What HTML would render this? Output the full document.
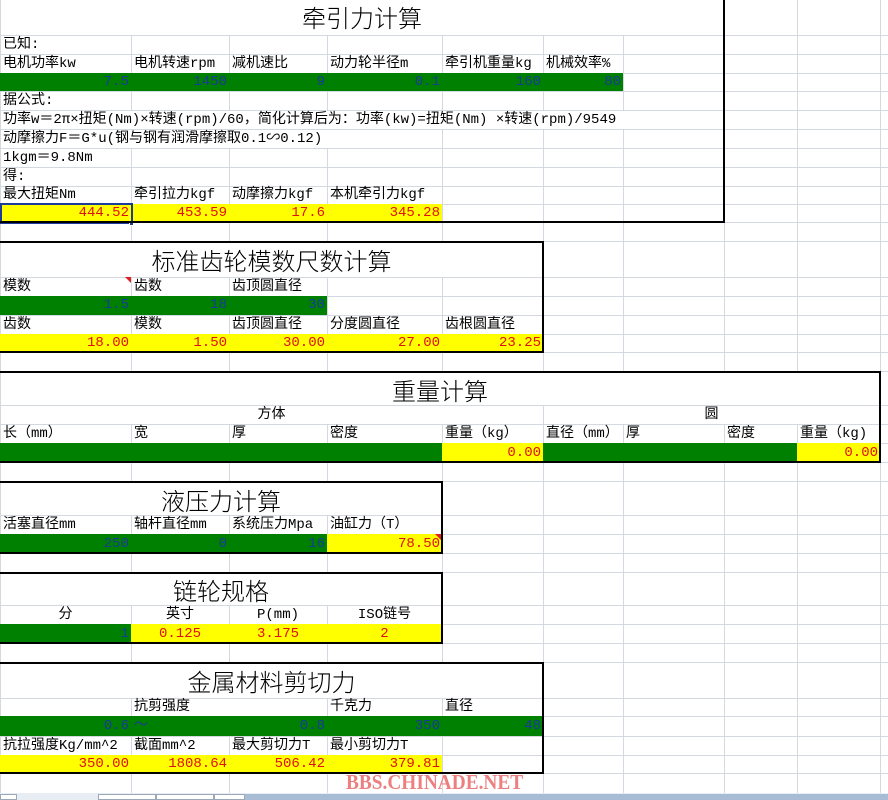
<!DOCTYPE html>
<html><head><meta charset="utf-8">
<style>
*{margin:0;padding:0;box-sizing:border-box}
body{width:888px;height:800px;overflow:hidden;background:#fff;position:relative;font-family:"Liberation Mono","Noto Sans CJK SC",monospace;font-size:14px;color:#000}
.v{position:absolute;top:0;width:1px;height:800px;background:#d4d8e0}
.h{position:absolute;left:0;height:1px;width:888px;background:#d4d8e0}
.f{position:absolute}
.g{background:#008000}
.y{background:#ffff00}
.w{background:#fff}
.c{position:absolute;white-space:nowrap;line-height:19px;padding:0 2px}
.r{text-align:right;font-family:"Liberation Mono","Noto Sans CJK SC",monospace;font-size:14px}
.n{color:#1a3a9a}
.e{color:#e01010}
.m{text-align:center}
.t{position:absolute;text-align:center;font-size:24px;font-family:"Noto Sans CJK SC","WenQuanYi Zen Hei",sans-serif;font-weight:300;line-height:30px}
.bt{position:absolute;height:2px;background:#000}
.bv{position:absolute;width:2px;background:#000}
</style></head><body>
<div class="v" style="left:0"></div><div class="v" style="left:131px"></div><div class="v" style="left:229px"></div><div class="v" style="left:327px"></div><div class="v" style="left:442px"></div><div class="v" style="left:543px"></div><div class="v" style="left:623px"></div><div class="v" style="left:724px"></div><div class="v" style="left:797px"></div><div class="v" style="left:880px"></div>
<div class="h" style="top:35px"></div><div class="h" style="top:54px"></div><div class="h" style="top:73px"></div><div class="h" style="top:91px"></div><div class="h" style="top:110px"></div><div class="h" style="top:129px"></div><div class="h" style="top:148px"></div><div class="h" style="top:167px"></div><div class="h" style="top:186px"></div><div class="h" style="top:204px"></div><div class="h" style="top:222px"></div><div class="h" style="top:241px"></div><div class="h" style="top:277px"></div><div class="h" style="top:296px"></div><div class="h" style="top:315px"></div><div class="h" style="top:334px"></div><div class="h" style="top:352px"></div><div class="h" style="top:371px"></div><div class="h" style="top:405px"></div><div class="h" style="top:424px"></div><div class="h" style="top:443px"></div><div class="h" style="top:462px"></div><div class="h" style="top:481px"></div><div class="h" style="top:515px"></div><div class="h" style="top:534px"></div><div class="h" style="top:553px"></div><div class="h" style="top:572px"></div><div class="h" style="top:605px"></div><div class="h" style="top:624px"></div><div class="h" style="top:643px"></div><div class="h" style="top:662px"></div><div class="h" style="top:698px"></div><div class="h" style="top:716px"></div><div class="h" style="top:736px"></div><div class="h" style="top:755px"></div><div class="h" style="top:773px"></div>

<div class="f w" style="left:1px;top:0;width:723px;height:35px"></div>
<div class="f w" style="left:1px;top:111px;width:722px;height:18px"></div>
<div class="f w" style="left:1px;top:130px;width:440px;height:18px"></div>
<div class="t" style="left:0;top:2px;width:724px">牵引力计算</div>
<div class="c" style="left:1px;top:36px">已知:</div>
<div class="c" style="left:1px;top:55px">电机功率kw</div><div class="c" style="left:132px;top:55px">电机转速rpm</div><div class="c" style="left:230px;top:55px">减机速比</div><div class="c" style="left:328px;top:55px">动力轮半径m</div><div class="c" style="left:443px;top:55px">牵引机重量kg</div><div class="c" style="left:544px;top:55px">机械效率%</div>
<div class="f g" style="left:0;top:73px;width:623px;height:18px"></div>
<div class="c r n" style="left:0;top:73px;width:131px">7.5</div><div class="c r n" style="left:131px;top:73px;width:98px">1450</div><div class="c r n" style="left:229px;top:73px;width:98px">9</div><div class="c r n" style="left:327px;top:73px;width:115px">0.1</div><div class="c r n" style="left:442px;top:73px;width:101px">160</div><div class="c r n" style="left:543px;top:73px;width:80px">80</div>
<div class="c" style="left:1px;top:92px">据公式:</div>
<div class="c" style="left:1px;top:111px">功率w＝2π×扭矩(Nm)×转速(rpm)/60，简化计算后为：功率(kw)=扭矩(Nm) ×转速(rpm)/9549</div>
<div class="c" style="left:1px;top:130px">动摩擦力F＝G*u(钢与钢有润滑摩擦取0.1∽0.12)</div>
<div class="c" style="left:1px;top:149px">1kgm＝9.8Nm</div>
<div class="c" style="left:1px;top:168px">得:</div>
<div class="c" style="left:1px;top:186px">最大扭矩Nm</div><div class="c" style="left:132px;top:186px">牵引拉力kgf</div><div class="c" style="left:230px;top:186px">动摩擦力kgf</div><div class="c" style="left:328px;top:186px">本机牵引力kgf</div>
<div class="f y" style="left:0;top:204px;width:442px;height:18px"></div>
<div class="c r e" style="left:0;top:204px;width:131px">444.52</div><div class="c r e" style="left:131px;top:204px;width:98px">453.59</div><div class="c r e" style="left:229px;top:204px;width:98px">17.6</div><div class="c r e" style="left:327px;top:204px;width:115px">345.28</div>
<div class="f" style="left:0;top:203px;width:133px;height:21px;border:2px solid #1c3c9c"></div>
<div class="f" style="left:129px;top:221px;width:5px;height:5px;background:#1c3c9c;border:1px solid #fff"></div>
<div class="bv" style="left:723px;top:0;height:223px"></div>
<div class="bt" style="left:0;top:221px;width:725px"></div>

<div class="f w" style="left:1px;top:242px;width:541px;height:35px"></div>
<div class="t" style="left:0;top:245px;width:543px">标准齿轮模数尺数计算</div>
<div class="c" style="left:1px;top:278px">模数</div><div class="c" style="left:132px;top:278px">齿数</div><div class="c" style="left:230px;top:278px">齿顶圆直径</div>
<div class="f" style="left:125px;top:277px;width:0;height:0;border-top:6px solid #e02020;border-left:6px solid transparent"></div>
<div class="f g" style="left:0;top:296px;width:327px;height:19px"></div>
<div class="c r n" style="left:0;top:296px;width:131px">1.5</div><div class="c r n" style="left:131px;top:296px;width:98px">18</div><div class="c r n" style="left:229px;top:296px;width:98px">30</div>
<div class="c" style="left:1px;top:316px">齿数</div><div class="c" style="left:132px;top:316px">模数</div><div class="c" style="left:230px;top:316px">齿顶圆直径</div><div class="c" style="left:328px;top:316px">分度圆直径</div><div class="c" style="left:443px;top:316px">齿根圆直径</div>
<div class="f y" style="left:0;top:334px;width:543px;height:18px"></div>
<div class="c r e" style="left:0;top:334px;width:131px">18.00</div><div class="c r e" style="left:131px;top:334px;width:98px">1.50</div><div class="c r e" style="left:229px;top:334px;width:98px">30.00</div><div class="c r e" style="left:327px;top:334px;width:115px">27.00</div><div class="c r e" style="left:442px;top:334px;width:101px">23.25</div>
<div class="bt" style="left:0;top:241px;width:544px"></div><div class="bv" style="left:542px;top:241px;height:112px"></div><div class="bt" style="left:0;top:351px;width:544px"></div>

<div class="f w" style="left:1px;top:372px;width:878px;height:33px"></div>
<div class="f w" style="left:1px;top:406px;width:541px;height:18px"></div>
<div class="f w" style="left:544px;top:406px;width:335px;height:18px"></div>
<div class="t" style="left:0;top:375px;width:880px">重量计算</div>
<div class="c m" style="left:0;top:406px;width:543px">方体</div><div class="c m" style="left:543px;top:406px;width:337px">圆</div>
<div class="c" style="left:1px;top:425px">长（mm）</div><div class="c" style="left:132px;top:425px">宽</div><div class="c" style="left:230px;top:425px">厚</div><div class="c" style="left:328px;top:425px">密度</div><div class="c" style="left:443px;top:425px">重量（kg）</div><div class="c" style="left:544px;top:425px">直径（mm）</div><div class="c" style="left:624px;top:425px">厚</div><div class="c" style="left:725px;top:425px">密度</div><div class="c" style="left:798px;top:425px">重量（kg)</div>
<div class="f g" style="left:0;top:443px;width:442px;height:19px"></div><div class="f y" style="left:442px;top:443px;width:101px;height:19px"></div><div class="f g" style="left:543px;top:443px;width:254px;height:19px"></div><div class="f y" style="left:797px;top:443px;width:83px;height:19px"></div>
<div class="c r e" style="left:442px;top:444px;width:101px">0.00</div><div class="c r e" style="left:797px;top:444px;width:83px">0.00</div>
<div class="bt" style="left:0;top:371px;width:881px"></div><div class="bv" style="left:879px;top:371px;height:92px"></div><div class="bt" style="left:0;top:461px;width:881px"></div>

<div class="f w" style="left:1px;top:482px;width:440px;height:33px"></div>
<div class="t" style="left:0;top:485px;width:442px">液压力计算</div>
<div class="c" style="left:1px;top:516px">活塞直径mm</div><div class="c" style="left:132px;top:516px">轴杆直径mm</div><div class="c" style="left:230px;top:516px">系统压力Mpa</div><div class="c" style="left:328px;top:516px">油缸力（T）</div>
<div class="f g" style="left:0;top:534px;width:327px;height:19px"></div><div class="f y" style="left:327px;top:534px;width:115px;height:19px"></div>
<div class="c r n" style="left:0;top:535px;width:131px">250</div><div class="c r n" style="left:131px;top:535px;width:98px">0</div><div class="c r n" style="left:229px;top:535px;width:98px">16</div><div class="c r e" style="left:327px;top:535px;width:115px">78.50</div>
<div class="f" style="left:435px;top:534px;width:0;height:0;border-top:6px solid #e02020;border-left:6px solid transparent"></div>
<div class="bt" style="left:0;top:481px;width:443px"></div><div class="bv" style="left:441px;top:481px;height:73px"></div><div class="bt" style="left:0;top:552px;width:443px"></div>

<div class="f w" style="left:1px;top:573px;width:440px;height:32px"></div>
<div class="t" style="left:0;top:575px;width:442px">链轮规格</div>
<div class="c m" style="left:0;top:606px;width:131px">分</div><div class="c m" style="left:131px;top:606px;width:98px">英寸</div><div class="c m" style="left:229px;top:606px;width:98px">P(mm)</div><div class="c m" style="left:327px;top:606px;width:115px">ISO链号</div>
<div class="f g" style="left:0;top:624px;width:131px;height:19px"></div><div class="f y" style="left:131px;top:624px;width:311px;height:19px"></div>
<div class="c r n" style="left:0;top:625px;width:131px">1</div><div class="c r e" style="left:131px;top:625px;width:98px;text-align:center">0.125</div><div class="c r e" style="left:229px;top:625px;width:98px;text-align:center">3.175</div><div class="c r e" style="left:327px;top:625px;width:115px;text-align:center">2</div>
<div class="bt" style="left:0;top:572px;width:443px"></div><div class="bv" style="left:441px;top:572px;height:72px"></div><div class="bt" style="left:0;top:642px;width:443px"></div>

<div class="f w" style="left:1px;top:663px;width:541px;height:35px"></div>
<div class="f w" style="left:132px;top:699px;width:194px;height:17px"></div>
<div class="t" style="left:0;top:666px;width:543px">金属材料剪切力</div>
<div class="c" style="left:132px;top:698px">抗剪强度</div><div class="c" style="left:328px;top:698px">千克力</div><div class="c" style="left:443px;top:698px">直径</div>
<div class="f g" style="left:0;top:716px;width:543px;height:20px"></div>
<div class="c r n" style="left:0;top:717px;width:131px">0.6</div><div class="c n" style="left:132px;top:717px">～</div><div class="c r n" style="left:229px;top:717px;width:98px">0.8</div><div class="c r n" style="left:327px;top:717px;width:115px">350</div><div class="c r n" style="left:442px;top:717px;width:101px">48</div>
<div class="c" style="left:1px;top:737px">抗拉强度Kg/mm^2</div><div class="c" style="left:132px;top:737px">截面mm^2</div><div class="c" style="left:230px;top:737px">最大剪切力T</div><div class="c" style="left:328px;top:737px">最小剪切力T</div>
<div class="f y" style="left:0;top:755px;width:442px;height:18px"></div>
<div class="c r e" style="left:0;top:755px;width:131px">350.00</div><div class="c r e" style="left:131px;top:755px;width:98px">1808.64</div><div class="c r e" style="left:229px;top:755px;width:98px">506.42</div><div class="c r e" style="left:327px;top:755px;width:115px">379.81</div>
<div class="bt" style="left:0;top:662px;width:544px"></div><div class="bv" style="left:542px;top:662px;height:112px"></div><div class="bt" style="left:0;top:772px;width:544px"></div>

<div class="f" style="left:346px;top:770px;font-family:'Liberation Serif',serif;font-weight:bold;font-size:21px;color:#ec8080;transform:scaleX(0.92);transform-origin:left">BBS.CHINADE.NET</div>

<div class="f" style="left:0;top:793px;width:888px;height:7px;background:#e8edf4"></div>
<div class="f" style="left:245px;top:794px;width:643px;height:6px;background:#a9bcd5"></div>
<div class="f" style="left:0;top:794px;width:17px;height:6px;background:#fff;border:1px solid #9aa8b8"></div>
<div class="f" style="left:98px;top:794px;width:58px;height:6px;background:#fff;border:1px solid #9aa8b8"></div>
<div class="f" style="left:156px;top:794px;width:58px;height:6px;background:#fff;border:1px solid #9aa8b8"></div>
<div class="f" style="left:214px;top:794px;width:31px;height:6px;background:#fff;border:1px solid #9aa8b8"></div>
</body></html>
